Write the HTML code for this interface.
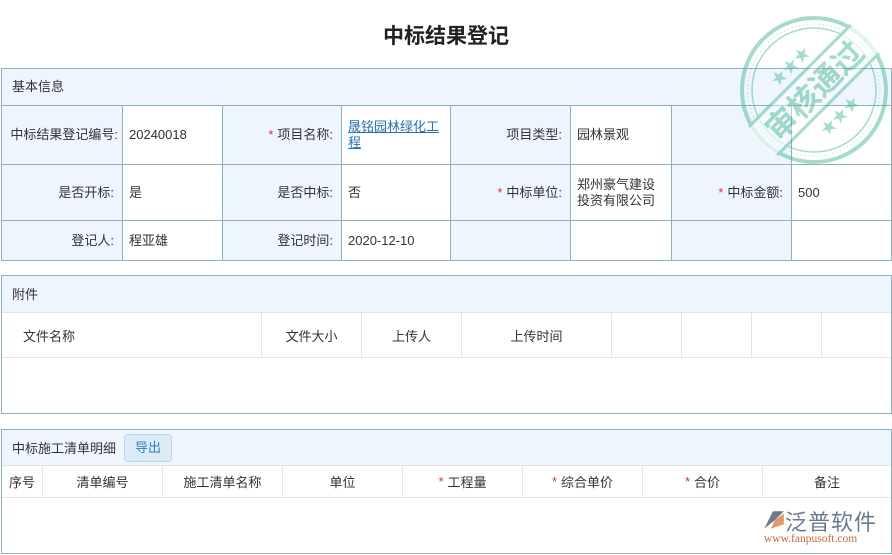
<!DOCTYPE html>
<html><head><meta charset="utf-8"><style>
*{margin:0;padding:0;box-sizing:border-box}
body{width:892px;height:555px;background:#fff;font-family:"Liberation Sans","Noto Sans CJK SC",sans-serif;font-size:13px;color:#333;position:relative;overflow:hidden}
.a{position:absolute}
.t{left:0;width:892px;top:20px;text-align:center;font-size:21px;font-weight:bold;color:#222}
.box{border:1px solid #8fb0c0}
.hd{background:#eff5fd}
.c{position:absolute;border-right:1px solid #8fb0c0;border-bottom:1px solid #8fb0c0;display:flex;align-items:center;padding:0 6px;line-height:16px}
.l{background:#eef5fc;justify-content:flex-end;padding-right:8px}
.r{color:#d33;margin-right:4px}
.g{position:absolute;border-right:1px solid #e3e3e3;display:flex;align-items:center;justify-content:center;height:100%;top:0}
a{color:#2a6fb0}
</style></head><body>
<div class="a t">中标结果登记</div>

<div class="a box" style="left:1px;top:68px;width:891px;height:193px">
<div class="a hd" style="left:0;top:0;width:889px;height:37px;border-bottom:1px solid #8fb0c0;padding:7px 10px">基本信息</div>
<div class="c l" style="left:0;top:37px;width:121px;height:59px;padding-right:4px">中标结果登记编号:</div>
<div class="c" style="left:121px;top:37px;width:100px;height:59px">20240018</div>
<div class="c l" style="left:221px;top:37px;width:119px;height:59px"><span class="r">*</span>项目名称:</div>
<div class="c" style="left:340px;top:37px;width:109px;height:59px"><a style="text-decoration:underline">晟铭园林绿化工程</a></div>
<div class="c l" style="left:449px;top:37px;width:120px;height:59px">项目类型:</div>
<div class="c" style="left:569px;top:37px;width:101px;height:59px">园林景观</div>
<div class="c l" style="left:670px;top:37px;width:120px;height:59px"></div>
<div class="c" style="left:790px;top:37px;width:99px;height:59px;border-right:0"></div>

<div class="c l" style="left:0;top:96px;width:121px;height:56px">是否开标:</div>
<div class="c" style="left:121px;top:96px;width:100px;height:56px">是</div>
<div class="c l" style="left:221px;top:96px;width:119px;height:56px">是否中标:</div>
<div class="c" style="left:340px;top:96px;width:109px;height:56px">否</div>
<div class="c l" style="left:449px;top:96px;width:120px;height:56px"><span class="r">*</span>中标单位:</div>
<div class="c" style="left:569px;top:96px;width:101px;height:56px">郑州豪气建设投资有限公司</div>
<div class="c l" style="left:670px;top:96px;width:120px;height:56px"><span class="r">*</span>中标金额:</div>
<div class="c" style="left:790px;top:96px;width:99px;height:56px;border-right:0">500</div>

<div class="c l" style="left:0;top:152px;width:121px;height:39px;border-bottom:0">登记人:</div>
<div class="c" style="left:121px;top:152px;width:100px;height:39px;border-bottom:0">程亚雄</div>
<div class="c l" style="left:221px;top:152px;width:119px;height:39px;border-bottom:0">登记时间:</div>
<div class="c" style="left:340px;top:152px;width:109px;height:39px;border-bottom:0">2020-12-10</div>
<div class="c l" style="left:449px;top:152px;width:120px;height:39px;border-bottom:0"></div>
<div class="c" style="left:569px;top:152px;width:101px;height:39px;border-bottom:0"></div>
<div class="c l" style="left:670px;top:152px;width:120px;height:39px;border-bottom:0"></div>
<div class="c" style="left:790px;top:152px;width:99px;height:39px;border:0"></div>
</div>

<div class="a box" style="left:1px;top:275px;width:891px;height:139px">
<div class="a hd" style="left:0;top:0;width:889px;height:37px;border-bottom:1px solid #e3e3e3;padding:8px 10px">附件</div>
<div class="a" style="left:0;top:37px;width:889px;height:45px;border-bottom:1px solid #e3e3e3">
<div class="g" style="left:0;width:260px;justify-content:flex-start;padding-left:21px">文件名称</div>
<div class="g" style="left:260px;width:100px">文件大小</div>
<div class="g" style="left:360px;width:100px">上传人</div>
<div class="g" style="left:460px;width:150px">上传时间</div>
<div class="g" style="left:610px;width:70px"></div>
<div class="g" style="left:680px;width:70px"></div>
<div class="g" style="left:750px;width:70px"></div>
</div>
</div>

<div class="a box" style="left:1px;top:429px;width:891px;height:125px">
<div class="a hd" style="left:0;top:0;width:889px;height:36px;border-bottom:1px solid #e3e3e3;padding:8px 10px">中标施工清单明细
<span class="a" style="left:122px;top:4px;width:48px;height:28px;border:1px solid #b8d4ea;border-radius:4px;background:#dcebf8;color:#2a7fc0;text-align:center;line-height:26px">导出</span></div>
<div class="a" style="left:0;top:36px;width:889px;height:32px;border-bottom:1px solid #e3e3e3">
<div class="g" style="left:0;width:41px">序号</div>
<div class="g" style="left:41px;width:120px">清单编号</div>
<div class="g" style="left:161px;width:120px">施工清单名称</div>
<div class="g" style="left:281px;width:120px">单位</div>
<div class="g" style="left:401px;width:120px"><span class="r">*</span>工程量</div>
<div class="g" style="left:521px;width:120px"><span class="r">*</span>综合单价</div>
<div class="g" style="left:641px;width:120px"><span class="r">*</span>合价</div>
<div class="g" style="left:761px;width:128px;border:0">备注</div>
</div>
</div>

<div class="a" style="left:762px;top:506px;width:125px;height:42px">
<svg class="a" style="left:0;top:3px" width="24" height="22" viewBox="0 0 22 20"><path d="M2 18 L10 2 L20 2 L12 10 Z" fill="#6c7a90"/><path d="M12 10 L20 4 L20 14 L8 18 Z" fill="#e39a6a"/></svg>
<div class="a" style="left:23px;top:-1px;font-size:22px;color:#6c7a90;letter-spacing:1px;white-space:nowrap">泛普软件</div>
<div class="a" style="left:2px;top:27px;font-size:11.5px;color:#c46a40;font-family:'Liberation Serif',serif;white-space:nowrap">www.fanpusoft.com</div>
</div>

<svg class="a" style="left:738px;top:14px;opacity:.5" width="152" height="152" viewBox="0 0 152 152">
<g fill="none" stroke="#4fb89a">
<circle cx="76" cy="76" r="72" stroke-width="4"/>
<circle cx="76" cy="76" r="62" stroke-width="1.5"/>
<circle cx="76" cy="76" r="66" stroke-width="1" stroke-dasharray="1 3"/>
</g>
<g transform="rotate(-45 76 76)">
<rect x="0" y="57" width="152" height="38" fill="#fff" fill-opacity="0.7"/>
<line x1="4" y1="56" x2="148" y2="56" stroke="#4fb89a" stroke-width="3"/>
<line x1="4" y1="96" x2="148" y2="96" stroke="#4fb89a" stroke-width="3"/>
<text x="76" y="88" text-anchor="middle" font-size="31" font-weight="bold" fill="#4fb89a" font-family="'Noto Sans CJK SC',sans-serif">审核通过</text>
<text x="76" y="48" text-anchor="middle" font-size="16" fill="#4fb89a">★★★</text>
<text x="76" y="118" text-anchor="middle" font-size="16" fill="#4fb89a">★★★</text>
</g>
</svg>
</body></html>
